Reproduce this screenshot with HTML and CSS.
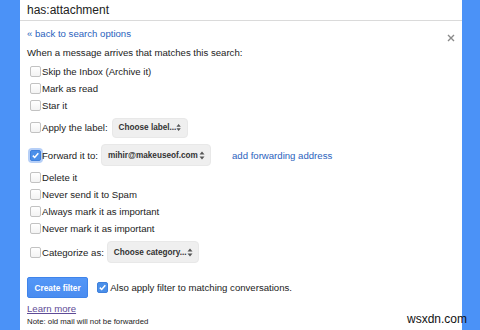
FILE: index.html
```html
<!DOCTYPE html>
<html>
<head>
  <meta charset="UTF-8">
  <title>Filter: has:attachment</title>
  <link rel="stylesheet" href="styles.css">
</head>
<body>
  <div class="panel">
    <div class="search-bar">has:attachment</div>
    <div class="filter-body">
      <span class="close">
        <svg width="8" height="8" viewBox="0 0 8 8"><path d="M1 1L7 7M7 1L1 7" stroke="#8a8a8a" stroke-width="1.4"/></svg>
      </span>
      <a class="back-link" href="#">&laquo; back to search options</a>
      <p class="intro">When a message arrives that matches this search:</p>
      <ul class="actions">
        <li class="action"><span class="check"></span>Skip the Inbox (Archive it)</li>
        <li class="action"><span class="check"></span>Mark as read</li>
        <li class="action"><span class="check"></span>Star it</li>
        <li class="action action-label"><span class="check"></span>Apply the label:
          <span class="select select-label">Choose label...
            <svg class="arrows" width="6" height="9" viewBox="0 0 6 9"><path d="M3 0.5L5.5 3.5H0.5Z M3 8.5L5.5 5.5H0.5Z" fill="#555"/></svg>
          </span>
        </li>
        <li class="action action-forward"><span class="check checked focused">
            <svg width="9" height="9" viewBox="0 0 9 9"><path d="M1.8 4.6L3.7 6.5L7.3 2.2" stroke="#fff" stroke-width="1.5" fill="none"/></svg>
          </span>Forward it to:
          <span class="select select-forward">mihir@makeuseof.com
            <svg class="arrows" width="6" height="9" viewBox="0 0 6 9"><path d="M3 0.5L5.5 3.5H0.5Z M3 8.5L5.5 5.5H0.5Z" fill="#555"/></svg>
          </span>
          <a class="add-link" href="#">add forwarding address</a>
        </li>
        <li class="action"><span class="check"></span>Delete it</li>
        <li class="action"><span class="check"></span>Never send it to Spam</li>
        <li class="action"><span class="check"></span>Always mark it as important</li>
        <li class="action"><span class="check"></span>Never mark it as important</li>
        <li class="action action-category"><span class="check"></span>Categorize as:
          <span class="select select-category">Choose category...
            <svg class="arrows" width="6" height="9" viewBox="0 0 6 9"><path d="M3 0.5L5.5 3.5H0.5Z M3 8.5L5.5 5.5H0.5Z" fill="#555"/></svg>
          </span>
        </li>
      </ul>
      <div class="footer-row">
        <button class="create-btn">Create filter</button>
        <span class="also-apply"><span class="check checked">
            <svg width="9" height="9" viewBox="0 0 9 9"><path d="M1.8 4.6L3.7 6.5L7.3 2.2" stroke="#fff" stroke-width="1.5" fill="none"/></svg>
          </span>Also apply filter to matching conversations.</span>
      </div>
      <a class="learn-more" href="#">Learn more</a>
      <div class="note">Note: old mail will not be forwarded</div>
    </div>
  </div>
  <div class="watermark">wsxdn.com</div>
</body>
</html>
```

FILE: styles.css
```css
body {
  margin: 0;
  width: 480px;
  height: 330px;
  overflow: hidden;
  position: relative;
  background-color: #4b92f7;
  font-family: 'Liberation Sans', Arial, sans-serif;
  color: #222;
}
.panel {
  margin-left: 20px;
  width: 442px;
  height: 330px;
  background-color: #ffffff;
}
.search-bar {
  height: 20px;
  line-height: 20px;
  padding-left: 7px;
  font-size: 12px;
  color: #222;
  border-bottom: 1px solid #dadada;
}
.filter-body {
  position: relative;
  padding: 0 7px;
  font-size: 9.6px;
}
.close {
  position: absolute;
  top: 7px;
  right: 7px;
  line-height: 0;
}
.back-link {
  display: block;
  margin-top: 6px;
  line-height: 14px;
  color: #2b62bd;
  text-decoration: none;
}
.intro {
  margin: 5px 0 0 0;
  line-height: 14px;
}
.actions {
  list-style: none;
  margin: 3px 0 0 0;
  padding: 0;
}
.action {
  display: flex;
  align-items: center;
  height: 17px;
  white-space: nowrap;
}
.action-label {
  height: 27px;
}
.action-forward {
  height: 28px;
}
.action-category {
  height: 30px;
}
.check {
  box-sizing: border-box;
  display: inline-flex;
  flex: none;
  align-items: center;
  justify-content: center;
  width: 11px;
  height: 11px;
  margin: 0 1px 0 3px;
  border: 1px solid #c2c2c2;
  border-radius: 2px;
  background: linear-gradient(#ffffff, #f3f3f3);
}
.check.checked {
  border-color: #3f80dc;
  background: #4a8fe9;
}
.check.focused {
  box-shadow: 0 0 0 2px rgba(110, 160, 240, 0.5);
}
.select {
  box-sizing: border-box;
  display: inline-flex;
  flex: none;
  align-items: center;
  justify-content: space-between;
  height: 22px;
  padding: 0 5px 0 6px;
  background-color: #efefef;
  border: 1px solid #e8e8e8;
  border-radius: 4px;
  font-size: 8.2px;
  font-weight: bold;
  color: #333;
  white-space: nowrap;
}
.select-label {
  width: 76px;
  height: 20px;
  margin-left: 4px;
}
.select-forward {
  width: 110px;
  margin-left: 3px;
}
.select-category {
  width: 92px;
  margin-left: 3px;
}
.add-link {
  margin-left: 21px;
  color: #2b62bd;
  text-decoration: none;
}
.footer-row {
  display: flex;
  align-items: center;
  margin-top: 10px;
  height: 21px;
}
.create-btn {
  height: 21px;
  padding: 0 6.5px;
  border: 1px solid #3f84ea;
  border-radius: 2px;
  background: linear-gradient(#5497f7, #4a8cf0);
  color: #fff;
  font-family: inherit;
  font-size: 8.3px;
  font-weight: bold;
}
.also-apply {
  display: flex;
  align-items: center;
  margin-left: 6px;
}
.also-apply .check {
  margin-right: 2px;
}
.learn-more {
  display: inline-block;
  margin-top: 4px;
  line-height: 14px;
  color: #5e4b96;
}
.note {
  line-height: 12px;
  font-size: 7.8px;
  color: #222;
}
.watermark {
  position: absolute;
  left: 407px;
  top: 312px;
  font-size: 12px;
  color: #111;
}
```
